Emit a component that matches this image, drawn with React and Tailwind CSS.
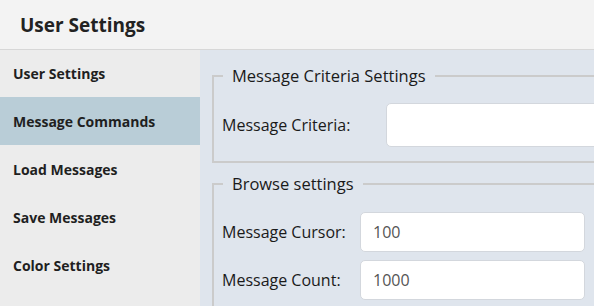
import React from "react";

const font = { fontFamily: '"Open Sans", "Noto Sans", sans-serif' };

function NavItem({ label, active, first }) {
  return (
    <div
      className={`flex items-center pl-[13px] text-[14px] font-bold text-[#1f1f1f] ${first ? "h-[47px]" : "h-[48px]"} ${active ? "bg-[#b9cdd7]" : ""}`}
    >
      {label}
    </div>
  );
}

function Field({ label, value, labelW }) {
  return (
    <div className="flex items-center">
      <div className={`shrink-0 text-[16px] text-[#1a1a1a] ${labelW}`}>{label}</div>
      <input
        readOnly
        value={value}
        className="w-[225px] h-[40px] rounded-[5px] border border-[#d3d7dd] bg-white px-[12px] text-[16px] text-[#555] outline-none"
        style={font}
      />
    </div>
  );
}

export default function App() {
  return (
    <div className="w-[594px] h-[306px] overflow-hidden bg-[#dfe5ed]" style={font}>
      <div className="h-[50px] flex items-center pl-[20px] pt-[2px] bg-[#f3f3f3] border-b border-[#d7d7d7] text-[19px] font-bold text-[#222]">
        User Settings
      </div>
      <div className="flex h-[256px]">
        <div className="w-[200px] shrink-0 bg-[#ececec]">
          <NavItem label="User Settings" first />
          <NavItem label="Message Commands" active />
          <NavItem label="Load Messages" />
          <NavItem label="Save Messages" />
          <NavItem label="Color Settings" />
        </div>
        <div className="flex-1 overflow-hidden pl-[12px] pt-[15px]">
          <fieldset className="w-[420px] border-2 border-[#cbcbcb] pl-[8px] pb-[14px]">
            <legend className="ml-[1px] px-[9px] text-[16.5px] leading-[22px] text-[#1a1a1a]">
              Message Criteria Settings
            </legend>
            <div className="pt-[16px] flex items-center">
              <div className="w-[164px] shrink-0 text-[16px] text-[#1a1a1a]">Message Criteria:</div>
              <input
                readOnly
                value=""
                className="w-[240px] h-[44px] rounded-[5px] border border-[#d3d7dd] bg-white px-[12px] text-[16px] outline-none"
              />
            </div>
          </fieldset>
          <fieldset className="mt-[10px] w-[420px] border-2 border-[#cbcbcb] pl-[8px] pb-[14px]">
            <legend className="ml-[1px] px-[9px] text-[16.5px] leading-[22px] text-[#1a1a1a]">
              Browse settings
            </legend>
            <div className="pt-[17px] flex flex-col gap-[8px]">
              <Field label="Message Cursor:" value="100" labelW="w-[138px]" />
              <Field label="Message Count:" value="1000" labelW="w-[138px]" />
            </div>
          </fieldset>
        </div>
      </div>
    </div>
  );
}
